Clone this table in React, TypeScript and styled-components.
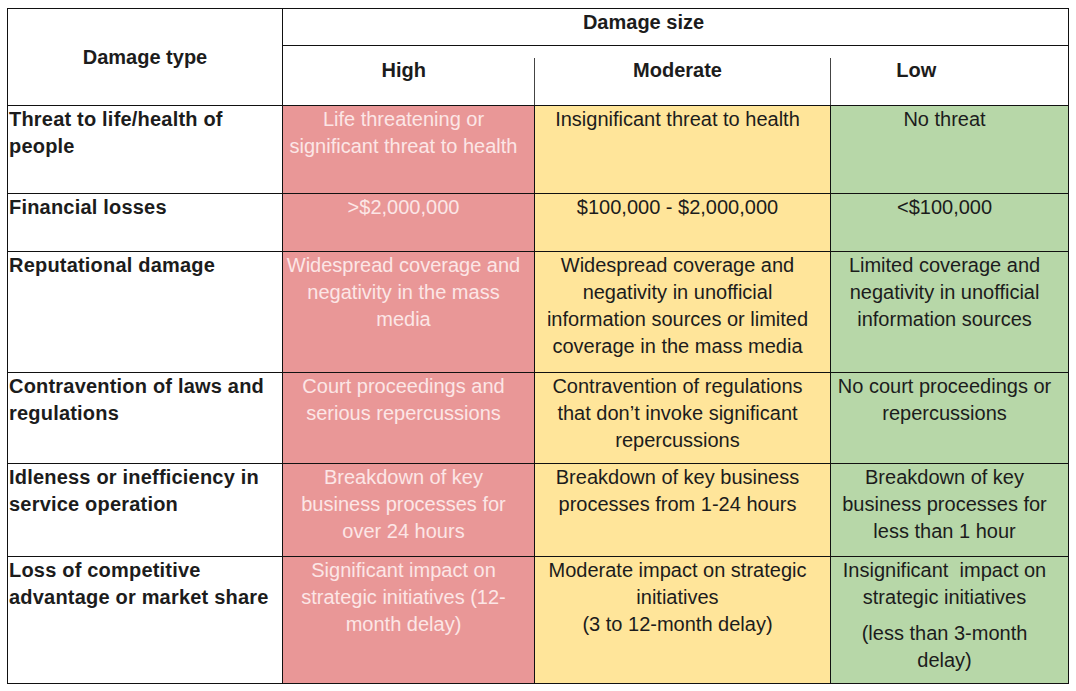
import React from "react";
import styled, { createGlobalStyle } from "styled-components";

const GlobalStyle = createGlobalStyle`
  body {
    margin: 8px 0 0 7px;
    background: #ffffff;
    font-family: "Liberation Sans", Arial, sans-serif;
    color: #1c1c1c;
  }
`;

const Table = styled.table`
  border-collapse: collapse;
  table-layout: fixed;
  width: 1061px;
  font-size: 20px;
  line-height: 27px;
`;

const Row = styled.tr<{ $h: number }>`
  height: ${(p) => p.$h}px;
`;

const HeadCell = styled.th<{ $shift?: number; $top?: number; $split?: boolean; $open?: boolean }>`
  position: relative;
  border: 1px solid #111;
  ${(p) => (p.$split ? "border-left-style: hidden;" : "")}
  ${(p) => (p.$open ? "border-right-style: hidden;" : "")}
  font-weight: bold;
  text-align: center;
  vertical-align: ${(p) => (p.$top === undefined ? "middle" : "top")};
  padding: ${(p) => p.$top ?? 0}px ${(p) => (p.$shift ?? 0) * 2}px 0 0;
  white-space: nowrap;

  &::before {
    content: "";
    display: ${(p) => (p.$split ? "block" : "none")};
    position: absolute;
    left: -1px;
    top: 12px;
    bottom: 0;
    width: 1px;
    background: #444;
  }
`;

const Label = styled.td`
  border: 1px solid #111;
  font-weight: bold;
  text-align: left;
  vertical-align: top;
  padding: 0 0 0 1px;
  white-space: nowrap;
  letter-spacing: 0.2px;
`;

const levels = {
  high: { bg: "#e99797", fg: "#fce6e6" },
  moderate: { bg: "#ffe59a", fg: "#1c1c1c" },
  low: { bg: "#b7d7a8", fg: "#1c1c1c" },
};

type Level = keyof typeof levels;

const Cell = styled.td<{ $level: Level }>`
  border: 1px solid #111;
  background: ${(p) => levels[p.$level].bg};
  color: ${(p) => levels[p.$level].fg};
  text-align: center;
  vertical-align: top;
  padding: 0 10px 0 0;
  white-space: nowrap;
`;

const Note = styled.div`
  margin-top: 9px;
`;

type Entry = { label: string[]; high: string[]; moderate: string[]; low: string[]; lowNote?: string[]; h: number };

const rows: Entry[] = [
  {
    label: ["Threat to life/health of", "people"],
    high: ["Life threatening or", "significant threat to health"],
    moderate: ["Insignificant threat to health"],
    low: ["No threat"],
    h: 88,
  },
  {
    label: ["Financial losses"],
    high: [">$2,000,000"],
    moderate: ["$100,000 - $2,000,000"],
    low: ["<$100,000"],
    h: 58,
  },
  {
    label: ["Reputational damage"],
    high: ["Widespread coverage and", "negativity in the mass", "media"],
    moderate: [
      "Widespread coverage and",
      "negativity in unofficial",
      "information sources or limited",
      "coverage in the mass media",
    ],
    low: ["Limited coverage and", "negativity in unofficial", "information sources"],
    h: 121,
  },
  {
    label: ["Contravention of laws and", "regulations"],
    high: ["Court proceedings and", "serious repercussions"],
    moderate: ["Contravention of regulations", "that don\u2019t invoke significant", "repercussions"],
    low: ["No court proceedings or", "repercussions"],
    h: 91,
  },
  {
    label: ["Idleness or inefficiency in", "service operation"],
    high: ["Breakdown of key", "business processes for", "over 24 hours"],
    moderate: ["Breakdown of key business", "processes from 1-24 hours"],
    low: ["Breakdown of key", "business processes for", "less than 1 hour"],
    h: 93,
  },
  {
    label: ["Loss of competitive", "advantage or market share"],
    high: ["Significant impact on", "strategic initiatives (12-", "month delay)"],
    moderate: ["Moderate impact on strategic", "initiatives", "(3 to 12-month delay)"],
    low: ["Insignificant\u00a0 impact on", "strategic initiatives"],
    lowNote: ["(less than 3-month", "delay)"],
    h: 127,
  },
];

function Lines({ lines }: { lines: string[] }) {
  return (
    <>
      {lines.map((l, i) => (
        <React.Fragment key={i}>
          {i > 0 && <br />}
          {l}
        </React.Fragment>
      ))}
    </>
  );
}

export default function App() {
  return (
    <>
      <GlobalStyle />
      <Table>
        <colgroup>
          <col style={{ width: 275 }} />
          <col style={{ width: 252 }} />
          <col style={{ width: 296 }} />
          <col style={{ width: 238 }} />
        </colgroup>
        <thead>
          <Row $h={37}>
            <HeadCell rowSpan={2} $shift={0}>
              Damage type
            </HeadCell>
            <HeadCell colSpan={3} $top={0} $shift={32}>
              Damage size
            </HeadCell>
          </Row>
          <Row $h={60}>
            <HeadCell $top={11} $shift={5} $open>
              High
            </HeadCell>
            <HeadCell $top={11} $shift={5} $split $open>
              Moderate
            </HeadCell>
            <HeadCell $top={11} $shift={33} $split>
              Low
            </HeadCell>
          </Row>
        </thead>
        <tbody>
          {rows.map((r, i) => (
            <Row $h={r.h} key={i}>
              <Label>
                <Lines lines={r.label} />
              </Label>
              <Cell $level="high">
                <Lines lines={r.high} />
              </Cell>
              <Cell $level="moderate">
                <Lines lines={r.moderate} />
              </Cell>
              <Cell $level="low">
                <Lines lines={r.low} />
                {r.lowNote && (
                  <Note>
                    <Lines lines={r.lowNote} />
                  </Note>
                )}
              </Cell>
            </Row>
          ))}
        </tbody>
      </Table>
    </>
  );
}
